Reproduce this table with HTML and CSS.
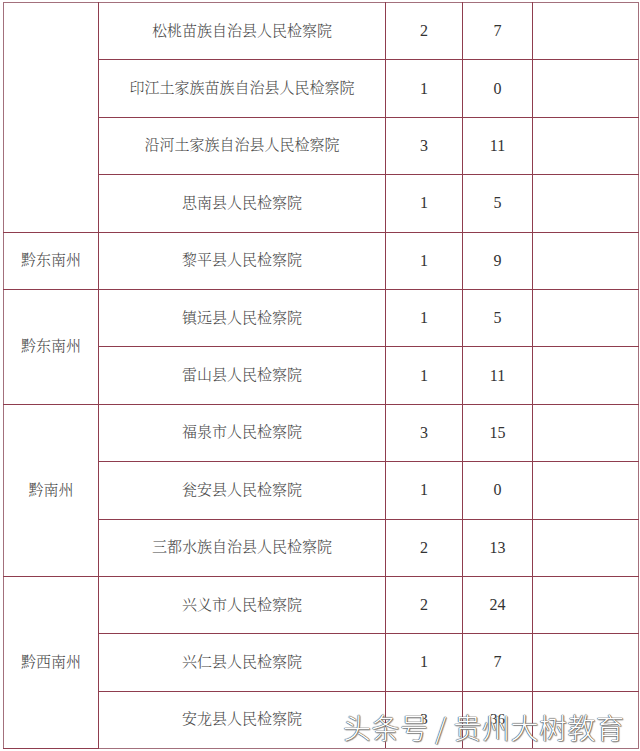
FILE: index.html
```html
<!DOCTYPE html>
<html lang="zh">
<head>
<meta charset="utf-8">
<title>检察院名单</title>
<link rel="stylesheet" href="styles.css">
</head>
<body>
<div class="page">
<table class="grid">
<colgroup>
<col class="c-region"><col class="c-name"><col class="c-a"><col class="c-b"><col class="c-note">
</colgroup>
<tbody>
<tr><td class="region" rowspan="4"></td><td class="name">松桃苗族自治县人民检察院</td><td class="num">2</td><td class="num">7</td><td></td></tr>
<tr><td class="name">印江土家族苗族自治县人民检察院</td><td class="num">1</td><td class="num">0</td><td></td></tr>
<tr><td class="name">沿河土家族自治县人民检察院</td><td class="num">3</td><td class="num">11</td><td></td></tr>
<tr><td class="name">思南县人民检察院</td><td class="num">1</td><td class="num">5</td><td></td></tr>
<tr><td class="region">黔东南州</td><td class="name">黎平县人民检察院</td><td class="num">1</td><td class="num">9</td><td></td></tr>
<tr><td class="region" rowspan="2">黔东南州</td><td class="name">镇远县人民检察院</td><td class="num">1</td><td class="num">5</td><td></td></tr>
<tr><td class="name">雷山县人民检察院</td><td class="num">1</td><td class="num">11</td><td></td></tr>
<tr><td class="region" rowspan="3">黔南州</td><td class="name">福泉市人民检察院</td><td class="num">3</td><td class="num">15</td><td></td></tr>
<tr><td class="name">瓮安县人民检察院</td><td class="num">1</td><td class="num">0</td><td></td></tr>
<tr><td class="name">三都水族自治县人民检察院</td><td class="num">2</td><td class="num">13</td><td></td></tr>
<tr><td class="region" rowspan="3">黔西南州</td><td class="name">兴义市人民检察院</td><td class="num">2</td><td class="num">24</td><td></td></tr>
<tr><td class="name">兴仁县人民检察院</td><td class="num">1</td><td class="num">7</td><td></td></tr>
<tr><td class="name">安龙县人民检察院</td><td class="num num-hidden">3</td><td class="num num-hidden">36</td><td></td></tr>
</tbody>
</table>
<div class="watermark">头条号 / 贵州大树教育</div>
</div>
</body>
</html>
```
FILE: styles.css
```css
html, body {
  margin: 0;
  padding: 0;
  background: #ffffff;
}
.page {
  position: relative;
  width: 640px;
  height: 751px;
  overflow: hidden;
  padding: 2px 0 0 3px;
  box-sizing: border-box;
}
.grid {
  border-collapse: collapse;
  table-layout: fixed;
  width: 635px;
  font-family: "Liberation Serif", "Noto Serif CJK SC", "Noto Sans CJK SC", serif;
  font-size: 15px;
  font-weight: 300;
  color: #474747;
  border: 1px solid #a3707c;
}
.c-region { width: 95px; }
.c-name { width: 287px; }
.c-a { width: 77px; }
.c-b { width: 70px; }
.c-note { width: 106px; }
.grid tr { height: 57.4px; }
.grid td {
  border: 1px solid #8f3d4e;
  text-align: center;
  vertical-align: middle;
  padding: 0;
  line-height: 1;
}
.grid td.region { border-left-color: #a3707c; }
.grid td:last-child { border-right-color: #a3707c; }
.grid tr:first-child td { border-top-color: #a3707c; }
.grid tr:last-child td { border-bottom-color: #a3707c; }
.num { font-size: 16px; color: #333333; }
.num-hidden { vertical-align: top; padding-top: 12px; font-size: 15px; }
.watermark {
  position: absolute;
  left: 343px;
  top: 707px;
  font-family: "Noto Sans CJK SC", sans-serif;
  font-size: 28px;
  font-weight: 300;
  letter-spacing: 0.5px;
  color: #ffffff;
  white-space: nowrap;
  text-shadow:
    0 0 1px #4a4a4a, 0 0 1px #4a4a4a, 0 0 1px #4a4a4a,
    1px 1px 1px #9a9a9a;
}
```
